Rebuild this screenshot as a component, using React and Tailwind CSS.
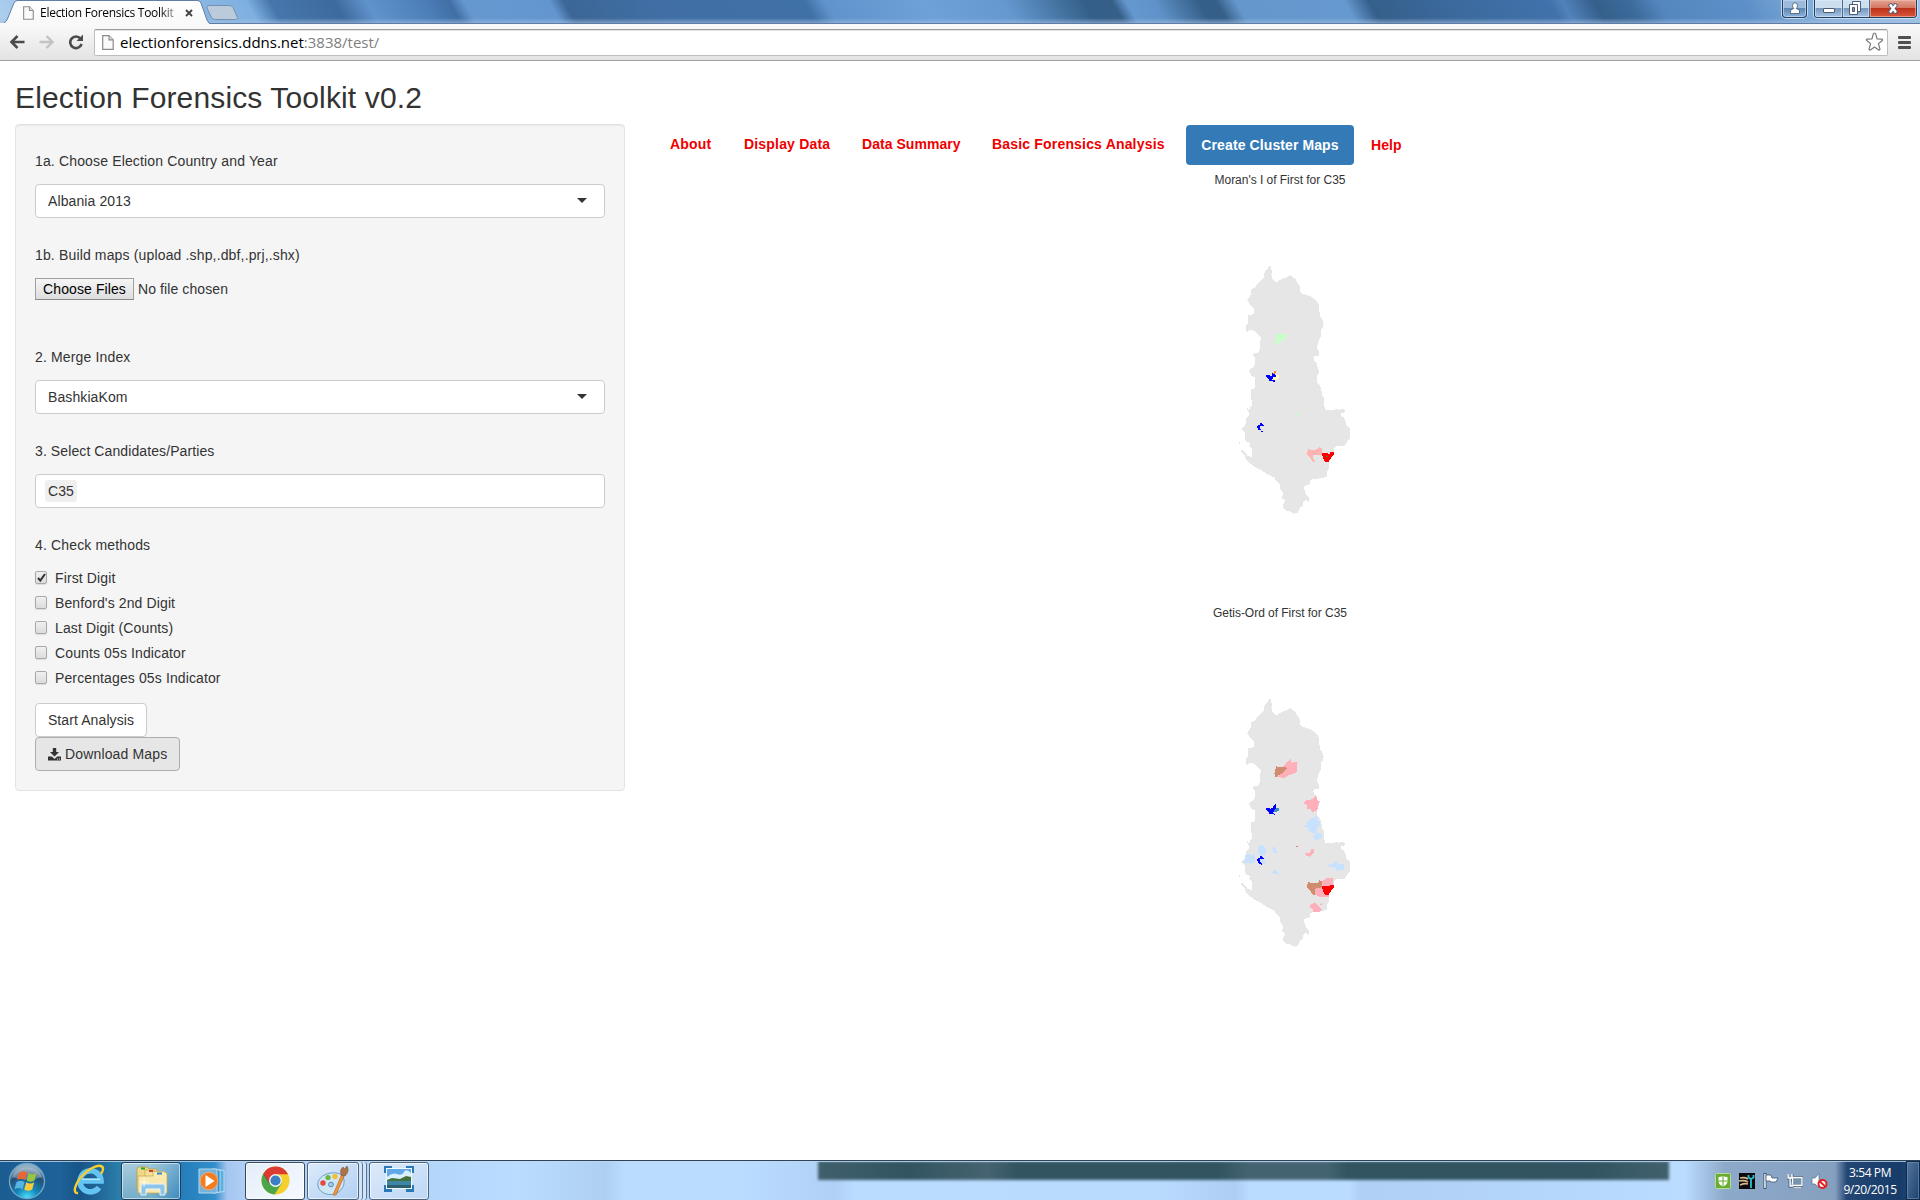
import React from "react";

const OUTLINE =
  "148,34 152,34 152,42 158,48 154,58 158,74 164,80 172,80 184,72 200,67 212,60 218,68 226,70 232,82 238,90 242,114 258,120 272,124 284,132 294,142 298,156 299,182 306,190 311,206 308,218 304,222 304,240 298,252 293,262 292,280 298,296 298,302 282,302 280,312 290,326 294,342 298,350 291,364 290,382 298,388 304,402 306,422 312,426 314,466 342,466 352,460 356,466 364,462 374,464 376,472 364,474 364,484 372,488 376,500 378,496 380,514 390,520 390,552 380,562 372,574 350,574 342,582 342,590 340,598 328,620 328,636 322,650 320,666 302,670 288,672 272,674 268,690 254,692 252,700 256,714 262,722 268,728 266,740 258,734 250,740 250,752 240,758 232,774 224,776 212,770 196,766 188,756 192,742 198,738 186,730 190,712 182,706 180,690 168,676 160,666 140,656 124,646 108,638 92,626 78,614 74,602 66,594 62,582 74,590 82,602 96,606 96,580 88,574 90,564 78,560 74,548 76,532 64,524 76,512 78,492 88,480 84,466 96,452 94,430 92,404 104,400 104,366 94,362 86,346 100,336 106,328 106,306 96,300 104,294 116,292 120,280 122,248 112,238 102,228 92,224 80,232 78,212 84,206 84,180 102,178 102,162 90,148 82,136 92,120 92,104 104,98 120,78 130,70 134,52";

const MORAN = [
  ["#c8ffc8", "168,232 174,238 186,235 204,242 196,250 184,258 168,269 165,262 168,250"],
  ["#c8ffc8", "228,473 234,473 234,479 228,479"],
  ["#ffffbe", "160,366 168,359 177,359 176,369 168,375 160,374"],
  ["#f08c14", "156,355 162,352 162,348 168,348 168,354 162,357"],
  ["#0000ff", "138,360 148,360 152,364 157,361 157,355 163,357 168,362 168,366 158,368 157,374 164,376 164,381 156,378 146,378 146,372 140,368"],
  ["#0000ff", "120,506 126,504 131,510 131,514 120,514 118,520 122,524 116,526 111,518 111,512 120,510"],
  ["#0000ff", "123,527 129,527 129,530 123,530"],
  ["#ffb4b4", "264,582 276,586 294,582 298,576 306,580 306,600 292,600 278,600 280,612 286,622 278,620 270,606 259,598"],
  ["#ff0000", "306,594 330,596 330,591 342,591 342,600 334,608 326,620 314,620 308,606"],
  ["#3f8c14", "318,603 324,603 324,606 318,606"],
];

const GETIS = [
  ["#ffafb9", "200,487 206,484 211,477 216,488 234,486 230,498 232,516 222,520 206,526 194,534 170,531 184,520 204,504 188,500"],
  ["#d08c6e", "168,498 174,502 188,500 204,504 190,518 178,524 168,534 163,522 166,512"],
  ["#ffafb9", "270,600 280,596 288,586 292,600 300,604 294,616 292,632 284,632 278,638 272,628 262,628 260,614 252,610 256,602"],
  ["#c8e1ff", "272,658 286,650 290,644 292,660 300,664 298,680 290,688 292,698 304,700 306,714 286,722 280,710 284,700 268,696 264,682 252,680 258,672"],
  ["#0000ff", "138,624 148,624 152,626 160,624 160,618 168,612 168,624 174,626 164,632 158,638 164,644 156,642 146,642 146,636 140,632"],
  ["#3c8cc8", "166,626 177,624 176,632 168,637 160,633"],
  ["#c8e1ff", "114,740 122,734 132,738 138,750 136,764 122,770 118,762 112,756"],
  ["#c8e1ff", "84,762 96,766 106,760 106,786 94,792 84,788 66,790 76,776 76,766"],
  ["#c8e1ff", "124,772 134,776 134,792 120,788"],
  ["#0000ff", "120,770 126,768 131,774 131,778 120,778 118,784 126,790 124,795 116,790 111,782 111,776 120,774"],
  ["#c8e1ff", "154,740 166,744 172,758 162,758"],
  ["#c8e1ff", "160,810 168,810 178,824 156,820"],
  ["#d08c6e", "228,738 234,738 234,741 228,741"],
  ["#ffafb9", "256,760 270,758 274,748 282,748 282,758 270,770 260,768"],
  ["#c8e1ff", "324,794 338,792 338,786 350,784 354,794 372,792 374,810 350,812 346,804 326,798"],
  ["#ffafb9", "308,842 322,834 340,834 340,856 308,858 306,850"],
  ["#ffafb9", "282,866 306,862 322,886 328,880 328,892 304,892 284,884"],
  ["#d08c6e", "264,846 276,850 294,848 298,840 306,844 306,862 286,866 286,886 278,884 270,870 259,862"],
  ["#ff0000", "306,858 330,859 330,855 342,855 342,864 334,872 326,884 314,884 308,870"],
  ["#ffafb9", "272,914 284,908 292,916 300,922 308,934 278,936 278,926 270,922"],
  ["#ffafb9", "300,912 306,910 306,916 302,917"],
];

function RegionMap({ patches, shift }) {
  return (
    <svg className="block h-[270px] w-[150px]" viewBox="0 0 450 810" shapeRendering="crispEdges">
      <polygon points={OUTLINE} fill="#e6e6e6" />
      <path d="M57 561h3v6h-3zM81 459h3v6h-3z" fill="#e6e6e6" />
      <g transform={shift}>
        {patches.map(([fill, points], i) => (
          <polygon key={i} points={points} fill={fill} />
        ))}
      </g>
    </svg>
  );
}

function PageIcon({ className }) {
  return (
    <svg className={className} viewBox="0 0 12 15">
      <path d="M.7.7H7l4.2 4.2v9.4H.7z" fill="#fafafa" stroke="#8b8b8b" strokeWidth="1.2" />
      <path d="M7 .7v4.2h4.2" fill="#e3e3e3" stroke="#8b8b8b" strokeWidth="1.1" />
    </svg>
  );
}

function TitleBar() {
  return (
    <div className="relative h-[24px] overflow-hidden bg-[#6397cf]">
      <div className="absolute -left-[20px] top-0 h-[24px] w-[1980px] skew-x-[30deg] bg-[linear-gradient(90deg,#b4d3f0_0,#9cc3e8_60px,#86b5e2_240px,#7eb0e0_272px,#4676ab_296px,#3d6a9d_360px,#6092cb_392px,#4b7db7_450px,#416fa5_475px,#6698d0_490px,#6396cf_575px,#3b6695_590px,#416fa5_680px,#3f70a6_830px,#6093cb_850px,#6da1d8_950px,#6498cf_1030px,#345f89_1110px,#365f88_1138px,#6598cf_1152px,#5f92c8_1180px,#345f88_1225px,#365f88_1242px,#6597cc_1262px,#6699d0_1370px,#355f8b_1395px,#3c6a9e_1480px,#4172ab_1575px,#5182ba_1588px,#355f8b_1620px,#3c6b9c_1655px,#5587bf_1685px,#5d90c8_1770px,#8ab4dd_1850px,#a3c6e8_1960px)]" />
      <div className="absolute inset-x-0 bottom-0 h-[6px] bg-gradient-to-b from-transparent to-[#a5bfe2]/70" />
      <div className="absolute inset-x-0 bottom-0 h-px bg-[#5f7da4]" />
      <svg className="absolute left-0 top-0 h-[24px] w-[245px]" viewBox="0 0 245 24">
        <defs>
          <linearGradient id="tab" x2="0" y2="1">
            <stop stopColor="#fff" />
            <stop offset="1" stopColor="#f8f8f8" />
          </linearGradient>
        </defs>
        <path d="M207 8q-1-2.500 2-2.500h20q3 0 4 2l4.500 10q.5 2-2 2h-20q-3 0-4-2z" fill="#bccbdb" stroke="#7690b0" />
        <path d="M0 24.500Q5 24 7 20L14 3q1-2.500 4-2.500H197q3 0 4 2.500l6 17q1.500 4 5 4.500z" fill="url(#tab)" stroke="#6280a4" />
        <path d="M0 24h208" stroke="#fafafa" strokeWidth="2" />
      </svg>
      <div className="relative flex h-[24px] items-center">
        <PageIcon className="ml-[23px] mt-px h-[14px] w-[11px]" />
        <span className="ml-[6px] mt-px w-[136px] overflow-hidden whitespace-nowrap bg-gradient-to-r from-black from-85% to-[#aaa] bg-clip-text font-['Open_Sans',sans-serif] text-[12px] leading-[20px] tracking-[-0.27px] text-transparent">
          Election Forensics Toolkit
        </span>
        <svg className="ml-[9px] mt-[2px] h-[8px] w-[8px]" viewBox="0 0 8 8">
          <path d="M1 1l6 6M7 1L1 7" stroke="#444" strokeWidth="1.900" />
        </svg>
        <div className="ml-auto flex self-start">
          <div className="flex h-[18px] w-[25px] items-center justify-center rounded-b-[4px] border border-t-0 border-[#253f5f] bg-[linear-gradient(#9cbbdc_45%,#5f87b4_50%,#8bb2dc)] shadow-[0_0_0_1px_#d4e6f8cc,inset_0_0_0_1px_#c5dbf0aa]">
            <svg className="-mt-px h-[12px] w-[10px]" viewBox="0 0 10 12">
              <path d="M.5 11.500V9q0-1.500 2-1.800L3.800 6.500Q2.500 5.500 2.500 3.500 2.700.7 5 .7t2.500 2.800q0 2-1.300 3l1.300.7q2 .3 2 1.800v2.500z" fill="#fff" stroke="#52657d" strokeWidth=".9" />
            </svg>
          </div>
          <div className="ml-[7px] mr-[3px] flex h-[18px] overflow-hidden rounded-b-[4px] border border-t-0 border-[#253f5f] shadow-[0_0_0_1px_#d4e6f8cc]">
            <div className="flex w-[28px] items-end justify-center border-r border-[#4c6a8b] bg-[linear-gradient(#cddeef_45%,#7798bd_50%,#a7c5e5)] pb-[4px] shadow-[inset_0_0_0_1px_#dcebfa99]">
              <div className="h-[5px] w-[12px] rounded-[1px] border border-[#4f5d73] bg-white" />
            </div>
            <div className="flex w-[27px] items-center justify-center border-r border-[#4c6a8b] bg-[linear-gradient(#cddeef_45%,#7798bd_50%,#a7c5e5)] pr-[3px] shadow-[inset_0_0_0_1px_#dcebfa99]">
              <svg className="-mt-px h-[14px] w-[12px]" viewBox="0 0 12 14">
                <path d="M3.500 .5h8v10h-8z" fill="#fff" stroke="#4f5d73" />
                <path d="M.5 3.500h8v10h-8z" fill="#fff" stroke="#4f5d73" />
                <path d="M3.500 6.500h2v4h-2z" fill="#7f97b4" stroke="#4f5d73" />
              </svg>
            </div>
            <div className="flex w-[46px] items-center justify-center bg-[linear-gradient(#e3a493_0,#d47862_45%,#bd321a_50%,#d9583c)] shadow-[inset_0_0_0_1px_#f3c3b499]">
              <svg className="-mt-px h-[11px] w-[12px]" viewBox="0 0 12 11">
                <path d="M2.500 .8l7 9.400M9.500 .8l-7 9.400" stroke="#545c74" strokeWidth="4.200" />
                <path d="M3 1.500l6 8M9 1.500L3 9.500" stroke="#fff" strokeWidth="2.400" />
              </svg>
            </div>
          </div>
        </div>
      </div>
    </div>
  );
}

function Toolbar() {
  return (
    <div className="flex h-[37px] items-center border-b border-[#a0a0a0] bg-gradient-to-b from-[#fafafa] to-[#e3e3e3] pl-[9px]">
      <svg className="h-[16px] w-[16px]" viewBox="0 0 16 16">
        <path d="M15.500 8H3M8.500 2L2.500 8l6 6" fill="none" stroke="#4b4b4b" strokeWidth="2.600" />
      </svg>
      <svg className="ml-[14px] h-[16px] w-[16px]" viewBox="0 0 16 16">
        <path d="M.5 8H13M7.500 2l6 6-6 6" fill="none" stroke="#c3c3c3" strokeWidth="2.400" />
      </svg>
      <svg className="ml-[13px] h-[16px] w-[16px]" viewBox="0 0 16 16">
        <path d="M12.500 4.500A5.800 5.800 0 1 0 13.600 10" fill="none" stroke="#4b4b4b" strokeWidth="2.600" />
        <path d="M15 .5V7H8.500z" fill="#4b4b4b" />
      </svg>
      <div className="ml-[10px] flex h-[27px] w-[1794px] items-center rounded-[2px] border border-[#bdbdbd] border-t-[#9c9c9c] bg-white pl-[7px] shadow-[inset_0_1px_0_#e4e4e4]">
        <PageIcon className="h-[15px] w-[12px]" />
        <div className="ml-[6px] whitespace-nowrap font-['Open_Sans',sans-serif] text-[15px] leading-[22px] tracking-[0px] text-black">
          electionforensics.ddns.net<span className="text-[#808080]">:3838/test/</span>
        </div>
        <svg className="ml-auto mr-[3px] h-[20px] w-[19px]" viewBox="0 0 19 20">
          <path d="M9.500 1q.9 0 1.300 1.200l1.200 4.700 4.800.2q1.300.3.5 1.400l-3.900 3.100 1.500 5.300q.1 1.500-1.200 1L9.500 15l-4.200 2.900q-1.300.5-1.200-1l1.500-5.300-3.900-3.100q-.8-1.100.5-1.400l4.800-.2 1.200-4.700Q8.600 1 9.500 1z" fill="#fff" stroke="#777" strokeWidth="1.200" strokeLinejoin="round" />
        </svg>
      </div>
      <div className="ml-[10px] flex w-[13px] flex-col gap-[2px]">
        <div className="h-[3px] rounded-[1px] bg-[#505050]" />
        <div className="h-[3px] rounded-[1px] bg-[#505050]" />
        <div className="h-[3px] rounded-[1px] bg-[#505050]" />
      </div>
    </div>
  );
}

function Select({ children }) {
  return (
    <div className="mt-[13px] flex h-[34px] items-center justify-between rounded-[4px] border border-[#ccc] bg-white pl-[12px] pr-[17px]">
      <span className="tracking-[0.1px]">{children}</span>
      <span className="-mt-px h-0 w-0 border-x-[5px] border-t-[5px] border-x-transparent border-t-[#333]" />
    </div>
  );
}

function Check({ checked, children }) {
  return (
    <div className="flex h-[25px] items-center">
      <span className="flex h-[13px] w-[12px] items-center justify-center rounded-[2px] border border-[#a8a8a8] bg-gradient-to-b from-[#f0f0f0] to-[#dcdcdc] shadow-[0_1px_1px_#0000001a]">
        {checked && (
          <svg className="h-[9px] w-[9px]" viewBox="0 0 9 9">
            <path d="M1 5l2.300 2.500L8 1" fill="none" stroke="#333" strokeWidth="2.100" />
          </svg>
        )}
      </span>
      <span className="ml-[8px] tracking-[0.12px]">{children}</span>
    </div>
  );
}

function Sidebar() {
  return (
    <form className="mt-[14px] h-[667px] w-[610px] rounded-[4px] border border-[#e3e3e3] bg-[#f5f5f5] px-[19px] pt-[26px] shadow-[inset_0_1px_1px_rgba(0,0,0,.05)]">
      <div className="h-[20px]">1a. Choose Election Country and Year</div>
      <Select>Albania 2013</Select>
      <div className="mt-[27px] h-[20px]">1b. Build maps (upload .shp,.dbf,.prj,.shx)</div>
      <div className="mt-[13px] flex h-[22px] items-center tracking-[0.1px]">
        <span className="flex h-[22px] w-[99px] items-center justify-center border border-[#a0a0a0] border-b-[#888] bg-gradient-to-b from-[#f6f6f6] to-[#dddddd] text-black">Choose Files</span>
        <span className="ml-[4px]">No file chosen</span>
      </div>
      <div className="mt-[47px] h-[20px]">2. Merge Index</div>
      <Select>BashkiaKom</Select>
      <div className="mt-[27px] h-[20px] tracking-[0.1px]">3. Select Candidates/Parties</div>
      <div className="mt-[13px] flex h-[34px] items-center rounded-[4px] border border-[#ccc] bg-white pl-[9px]">
        <span className="rounded-[3px] bg-[#efefef] px-[3px] py-px tracking-[0.1px]">C35</span>
      </div>
      <div className="mt-[27px] h-[20px]">4. Check methods</div>
      <div className="mt-[10px]">
        <Check checked>First Digit</Check>
        <Check>Benford's 2nd Digit</Check>
        <Check>Last Digit (Counts)</Check>
        <Check>Counts 05s Indicator</Check>
        <Check>Percentages 05s Indicator</Check>
      </div>
      <div className="mt-[13px] flex h-[34px] w-[112px] items-center justify-center rounded-[4px] border border-[#ccc] bg-white tracking-[0.1px]">Start Analysis</div>
      <div className="flex h-[34px] w-[145px] items-center rounded-[4px] border border-[#adadad] bg-[#e6e6e6] pl-[12px]">
        <svg className="mr-[4px] h-[13px] w-[13px]" viewBox="0 0 13 13">
          <path d="M4.800 0h3.400v4H11L6.500 8.600 2 4h2.800z" fill="#333" />
          <path d="M0 8.500h3.800l2.700 2.400 2.700-2.400H13V12.500H0z" fill="#333" />
          <path d="M9 11h1M11 11h1" stroke="#e6e6e6" />
        </svg>
        <span>Download Maps</span>
      </div>
    </form>
  );
}

function Tabs() {
  return (
    <nav className="flex h-[40px] items-center whitespace-nowrap font-bold tracking-[0.18px] text-[#f00000]">
      <span className="-mt-[2px] w-[74px]">About</span>
      <span className="-mt-[2px] w-[118px]">Display Data</span>
      <span className="-mt-[2px] w-[130px] tracking-[0.05px]">Data Summary</span>
      <span className="-mt-[2px] w-[194px]">Basic Forensics Analysis</span>
      <span className="flex h-[40px] w-[168px] items-center justify-center rounded-[4px] bg-[#337ab7] tracking-[0.1px] text-white">Create Cluster Maps</span>
      <span className="ml-[17px] tracking-[0.1px]">Help</span>
    </nav>
  );
}

function Content() {
  return (
    <main className="flex h-[1099px] bg-white pl-[15px] text-[14px] leading-[20px] tracking-[0.15px] text-[#333]">
      <section className="w-[655px] pt-[20px]">
        <h2 className="h-[29px] text-[30px] leading-[33px] tracking-[0.13px]">Election Forensics Toolkit v0.2</h2>
        <Sidebar />
      </section>
      <section className="w-[1220px] pt-[64px]">
        <Tabs />
        <div className="flex w-[1220px] flex-col items-center text-[12px] leading-[16px] tracking-[-0.03px]">
          <div className="mt-[7px] h-[16px]">Moran's I of First for C35</div>
          <div className="mt-[67px] w-[120px]">
            <RegionMap patches={MORAN} />
          </div>
          <div className="mt-[80px] h-[16px]">Getis-Ord of First for C35</div>
          <div className="mt-[67px] w-[120px]">
            <RegionMap patches={GETIS} shift="translate(0 -264)" />
          </div>
        </div>
      </section>
    </main>
  );
}

function StartOrb() {
  return (
    <svg className="h-[38px] w-[38px]" viewBox="0 0 38 38">
      <defs>
        <radialGradient id="orb" cx=".5" cy="1" r=".9">
          <stop stopColor="#4fe8ff" />
          <stop offset=".35" stopColor="#1689bd" />
          <stop offset=".75" stopColor="#224e74" />
          <stop offset="1" stopColor="#91aec3" />
        </radialGradient>
      </defs>
      <circle cx="19" cy="19" r="17.500" fill="url(#orb)" stroke="#6fa6c8" strokeWidth="1.400" />
      <path d="M4 15a15.500 13 0 0 1 30 0q-14 5-30 0" fill="#fff" opacity=".28" />
      <path d="M11 11q4-3 8-.5l-2 7.500q-4-2.500-8 0z" fill="#ee6535" />
      <path d="M20.500 11q4 2.500 8 0l-2 7.500q-4 2.500-7.800 0z" fill="#98c540" />
      <path d="M8.500 20q4-2.600 8 0l-2 7.300q-4-2.500-8 0z" fill="#58b4e5" />
      <path d="M18.200 20.200q4 2.600 8 0l-2 7.300q-4 2.600-8 0z" fill="#fbca3d" />
    </svg>
  );
}

function IeIcon() {
  return (
    <svg className="h-[32px] w-[32px]" viewBox="0 0 32 32">
      <path d="M9 17h19A10.500 10.500 0 1 0 26 23.500" fill="none" stroke="#63c4f3" strokeWidth="5.600" />
      <path d="M9 15.300h18" stroke="#c0ecff" strokeWidth="1.200" />
      <path d="M5 29C-1 30 2 19 10 11S28-1 30 4q.5 2-2 6" fill="none" stroke="#f7cf2c" strokeWidth="2.400" />
    </svg>
  );
}

function FolderIcon() {
  return (
    <svg className="h-[30px] w-[33px]" viewBox="0 0 33 30">
      <path d="M2 3q0-2 2-2h8l2 2h8v20H2z" fill="#f1d884" stroke="#b99843" strokeWidth=".7" />
      <path d="M6 1.500h4v2H6z" fill="#23a53b" />
      <path d="M10 4h9l2 2h7v20H10z" fill="#f5e197" stroke="#c6a755" strokeWidth=".7" />
      <path d="M14 4h4v2h-4z" fill="#d23b32" />
      <path d="M18 5.500h11l3 2V27H3V10h15z" fill="#f9e9ad" stroke="#c6a755" strokeWidth=".7" />
      <path d="M22 6.500h5v2h-5z" fill="#2c86d1" />
      <path d="M6 29V20q0-2 2-2h20q2 0 2 2v9h-5v-6H11v6z" fill="#8cc5e8" stroke="#e8f6ff" />
      <path d="M9 12v9M5 16h9" stroke="#fff" strokeWidth=".8" />
    </svg>
  );
}

function MediaIcon() {
  return (
    <svg className="h-[26px] w-[30px]" viewBox="0 0 30 26">
      <path d="M16 1l10 1.500v21L16 25z" fill="#5faedc" stroke="#c7e7fa" strokeWidth=".8" />
      <path d="M14 1l8 1v22l-8 1z" fill="#3d92cb" stroke="#c7e7fa" strokeWidth=".8" />
      <path d="M1 1h18v24H1z" fill="#76b3db" stroke="#b3d8ee" />
      <circle cx="11" cy="13" r="8.800" fill="#f57b1f" stroke="#ffb479" strokeWidth=".7" />
      <path d="M7.500 7v12l9-6z" fill="#fff" />
    </svg>
  );
}

function ChromeIcon() {
  return (
    <svg className="h-[29px] w-[29px]" viewBox="0 0 29 29">
      <circle cx="14.500" cy="14.500" r="14" fill="#f5cf2e" />
      <path d="M14.500 14.500L2.400 7.500A14 14 0 0 0 13.500 28.500L21 17z" fill="#49a64b" />
      <path d="M14.500 14.500L2.400 7.500A14 14 0 0 1 27 8.300H14.500z" fill="#dc3b32" />
      <path d="M2.400 7.500l6 9L14 8.300z" fill="#dc3b32" />
      <path d="M3 8.500l5.600 9.500" stroke="#a52924" strokeWidth=".6" />
      <circle cx="14.500" cy="14.500" r="6.500" fill="#f3f3f3" />
      <circle cx="14.500" cy="14.500" r="5.100" fill="#3d7fc5" />
    </svg>
  );
}

function PaintIcon() {
  return (
    <svg className="h-[31px] w-[32px]" viewBox="0 0 32 31">
      <path d="M14 8C5 9 0 15 1 21s9 10 16 8 11-8 10-14S20 7 14 8z" fill="#cfe6f6" stroke="#6f9fc3" />
      <circle cx="6" cy="18" r="2.700" fill="#e4483d" />
      <circle cx="11" cy="12.500" r="2.600" fill="#69b740" />
      <circle cx="18" cy="11.500" r="2.700" fill="#f3bf35" />
      <circle cx="14" cy="19.500" r="2.400" fill="#a5cbe8" stroke="#5288b1" />
      <path d="M16 30l8.500-20 2.500 1.200L19 30z" fill="#ed963c" stroke="#bd6a22" strokeWidth=".7" />
      <path d="M24.500 10.500Q22 5 26 2l1.500 2L30 1q3 5-2 10z" fill="#a9744b" stroke="#815331" strokeWidth=".6" />
    </svg>
  );
}

function PhotoIcon() {
  return (
    <svg className="h-[26px] w-[30px]" viewBox="0 0 30 26">
      <path d="M0 0h8v7H0zM22 0h8v7h-8zM0 19h8v7H0zM22 19h8v7h-8z" fill="#2d79b6" />
      <path d="M2 2h26v21H2z" fill="#f2f9fe" />
      <path d="M3 3h24v11H3z" fill="#62a8e6" />
      <path d="M3 11q5-5 10-3t7-2 7 1v7H3z" fill="#d8effc" />
      <path d="M3 14l5-2 8 1 6-3 5 1v5H3z" fill="#43713c" />
      <path d="M3 15h24v7H3z" fill="#3f86a5" />
      <path d="M3 19h24v3H3z" fill="#2a5f70" />
    </svg>
  );
}

function TrayIcons() {
  return (
    <>
      <svg className="h-[16px] w-[16px]" viewBox="0 0 16 16">
        <rect x=".5" y=".5" width="15" height="15" rx="1" fill="#68ac31" stroke="#b9dc94" />
        <path d="M3.500 4q2.500 0 4.500-1 2 1 4.500 1v4q0 3.500-4.500 5.500Q3.500 11.500 3.500 8z" fill="#fff" />
        <path d="M8 3v10.500M3.500 8h9" stroke="#68ac31" strokeWidth="1.100" />
      </svg>
      <svg className="h-[16px] w-[16px]" viewBox="0 0 16 16">
        <path d="M0 0h16v16H0z" fill="#0b0b0d" />
        <path d="M1 5q5-1 8 1M0 8q6-1 9 1M1 12q5-2 8-1" fill="none" stroke="#d8b68a" strokeWidth="1.600" />
        <path d="M9.500 2v2.500l2.500 1.500 2.500-1.500V2M12 6v9" fill="none" stroke="#2cc0d4" strokeWidth="1.800" />
      </svg>
      <svg className="h-[16px] w-[16px]" viewBox="0 0 16 16">
        <path d="M2 0v16" stroke="#3e556f" strokeWidth="3" />
        <path d="M2 1v14" stroke="#fff" strokeWidth="1.400" />
        <path d="M3 2h5l1 3h6l-2 4H8L7 8H3z" fill="#fff" stroke="#3e556f" strokeWidth=".8" />
      </svg>
      <svg className="h-[16px] w-[16px]" viewBox="0 0 16 16">
        <path d="M5.500 4.500h10v8h-10zM7 15h7M1 1v4h4V1M3 5v8h3" fill="none" stroke="#3e556f" strokeWidth="2.800" />
        <path d="M5.500 4.500h9.500v8H5.500zM7 14.800h7" fill="#7893ae" stroke="#fff" strokeWidth="1.300" />
        <path d="M1 1v4h4V1M3 5v8h3" fill="#8da4bd" stroke="#fff" strokeWidth="1.300" />
      </svg>
      <svg className="h-[16px] w-[17px]" viewBox="0 0 17 16">
        <path d="M1 5h3l4-4.500v14L4 11H1z" fill="#fff" stroke="#58708b" strokeWidth=".7" />
        <circle cx="11.500" cy="11" r="4" fill="#fff" stroke="#e12121" strokeWidth="2" />
        <path d="M8.800 8.200l5.400 5.400" stroke="#e12121" strokeWidth="2" />
      </svg>
    </>
  );
}

function Taskbar() {
  return (
    <footer className="relative h-[40px] overflow-hidden border-t border-[#2c4358] bg-[linear-gradient(90deg,#1b5d92_0,#1d6299_60px,#175487_80px,#2c80ac_122px,#4b98b4_150px,#247cb9_180px,#338fcb_215px,#a4c5ef_227px,#b0cff6_245px,#b3d6fb_430px,#b9dcff_520px,#aecff2_605px,#b9dcff_625px,#badcff_740px,#b0d1f5_835px,#badcff_855px,#b9dbfe_1160px,#aecef2_1235px,#badcff_1250px,#badcff_1350px,#b0d0f4_1360px,#b5d8fc_1590px,#badcff_1685px,#8da9c9_1725px,#859fbf_1835px,#234673_1847px,#173c69_1900px,#234d7d_1920px)]">
      <div className="absolute left-[818px] top-0 h-[19px] w-[851px] bg-[linear-gradient(90deg,#405f6d_0,#315460_90px,#456370_170px,#315460_200px,#315460_400px,#446371_430px,#446371_510px,#315460_530px,#315460_770px,#42616e_853px)] blur-[1.500px]" />
      <div className="absolute inset-x-0 top-0 h-px bg-[#c2d7ed]/80" />
      <div className="relative flex h-[39px] items-center">
        <div className="ml-[8px]"><StartOrb /></div>
        <div className="-mt-[2px] ml-[27px]"><IeIcon /></div>
        <div className="ml-[16px] flex h-[38px] w-[60px] items-center justify-center rounded-[3px] border border-[#1f3f5b] bg-gradient-to-br from-white/60 via-white/35 to-white/10 shadow-[inset_0_0_0_1px_#ffffff88]"><FolderIcon /></div>
        <div className="ml-[17px]"><MediaIcon /></div>
        <div className="ml-[17px] flex h-[38px] w-[60px] items-center justify-center rounded-[3px] border border-[#38495c] bg-gradient-to-br from-[#e4edf8] to-[#f5faff] shadow-[inset_0_0_0_1px_#ffffffaa]"><ChromeIcon /></div>
        <div className="ml-[2px] flex h-[38px] w-[52px] items-center justify-center rounded-[3px] border border-[#4f647d] bg-gradient-to-br from-[#dceafa] to-[#b1d0f4] shadow-[inset_0_0_0_1px_#ffffff99]"><PaintIcon /></div>
        <div className="h-[38px] w-[4px] rounded-r-[3px] border-r border-[#5a7390] bg-[#d2e4f8]" />
        <div className="h-[38px] w-[4px] rounded-r-[3px] border-r border-[#5a7390] bg-[#d2e4f8]" />
        <div className="ml-[2px] flex h-[38px] w-[60px] items-center justify-center rounded-[3px] border border-[#4f647d] bg-gradient-to-br from-[#dceafa] to-[#bdd7f6] pb-[3px] shadow-[inset_0_0_0_1px_#ffffff99]"><PhotoIcon /></div>
        <div className="ml-auto flex items-center gap-[8px]"><TrayIcons /></div>
        <div className="ml-[6px] w-[72px] text-center font-['Open_Sans',sans-serif] text-[12px] leading-[17px] tracking-[-0.4px] text-white">
          <div>3:54 PM</div>
          <div>9/20/2015</div>
        </div>
        <div className="h-[39px] w-[14px] border border-[#0d2a4c] bg-gradient-to-br from-[#55779e] to-[#1a426f] shadow-[inset_0_0_0_1px_#7b98ba88]" />
      </div>
    </footer>
  );
}

export default function App() {
  return (
    <div className="flex h-[1200px] w-[1920px] flex-col overflow-hidden bg-white font-['Liberation_Sans',Arial,sans-serif]">
      <TitleBar />
      <Toolbar />
      <Content />
      <Taskbar />
    </div>
  );
}
